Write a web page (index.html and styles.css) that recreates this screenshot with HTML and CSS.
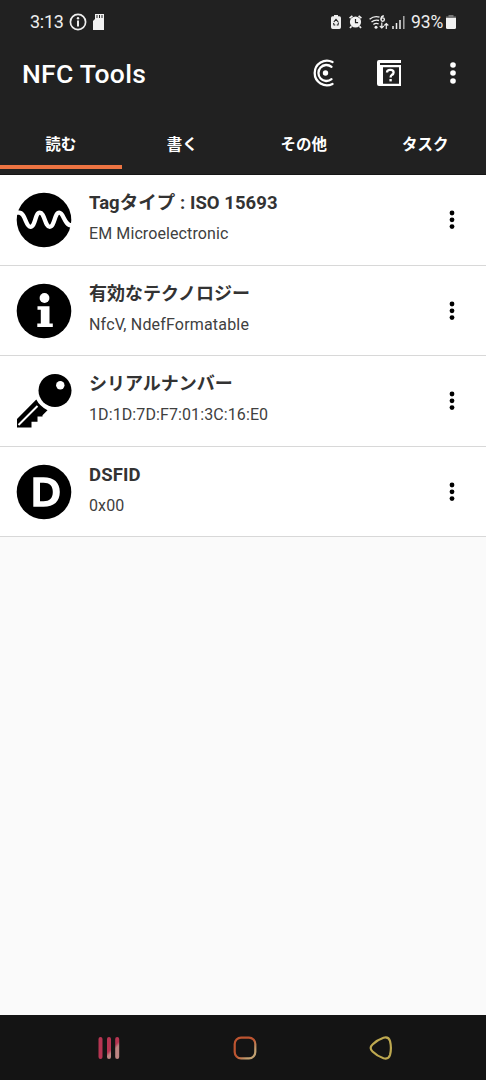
FILE: index.html
```html
<!DOCTYPE html>
<html lang="ja">
<head>
<meta charset="utf-8">
<title>NFC Tools</title>
<link rel="stylesheet" href="styles.css">
</head>
<body>
<div class="app">
  <header class="header">
    <div class="status">
      <span class="clock">3:13</span>
      <svg class="status-info" width="18" height="18" viewBox="0 0 18 18"><circle cx="9" cy="9" r="7.6" fill="none" stroke="#eee" stroke-width="1.7"/><rect x="8" y="7.5" width="2" height="6" fill="#eee"/><circle cx="9" cy="5.2" r="1.2" fill="#eee"/></svg>
      <svg class="status-sd" width="11" height="16" viewBox="0 0 11 16"><path d="M2 0h9v16H0V7l2-2z" fill="#f2f2f2"/><path d="M4 1v3M6.5 1v3M9 1v3" stroke="#222" stroke-width="1"/></svg>
      <div class="status-right">
        <svg width="10" height="14" viewBox="0 0 10 14"><path d="M3 0h4v1.3h1.500Q10 1.300 10 3v9.300Q10 14 8.300 14H1.700Q0 14 0 12.300V3Q0 1.300 1.500 1.300H3z" fill="#eee"/><path d="M2.800 7L5 4.300 7.200 7M7.500 7.500L7 10H5.700M4.300 10H3L2.500 8" fill="none" stroke="#222" stroke-width="1.100"/></svg>
        <svg class="alarm" width="13" height="14" viewBox="0 0 13 14"><circle cx="6.500" cy="7" r="5.600" fill="#f2f2f2"/><path d="M.6 3.200L3.400.8M9.600.8l2.800 2.400M2.500 11.200L1 13M10.500 11.200L12 13" stroke="#f2f2f2" stroke-width="1.700"/><path d="M6.500 4v3.600h2.600" fill="none" stroke="#222" stroke-width="1.200"/></svg>
        <svg class="wifi" width="20" height="15" viewBox="0 0 20 15"><g fill="none" stroke="#eee" stroke-width="1.400"><path d="M.6 4.300Q5.200.4 10.500 2.200M2.500 7Q6 4.200 10 5.500M4.400 9.500Q7 7.600 9.600 9"/><path d="M14.800.8Q12 1.300 12 4.400"/><circle cx="13.700" cy="4.600" r="1.700"/><path d="M12.800 7.500V13M10.800 11l2 2 2-2M17.300 14V8.500M15.300 10.500l2-2 2 2" stroke-width="1.200"/></g><circle cx="7" cy="12.200" r="1.500" fill="#eee"/></svg>
        <svg class="signal" width="13" height="13" viewBox="0 0 13 13"><path d="M1 10v3M4.500 7v6M8 4v9" stroke="#eee" stroke-width="1.500"/><path d="M11.800 0v13" stroke="#aaa" stroke-width="1.500"/></svg>
        <span class="percent">93%</span>
        <svg class="battery" width="10" height="14" viewBox="0 0 10 14"><path d="M2.500 0h5v1.500H10V4H0V1.500h2.500z" fill="#777"/><path d="M0 3h10v9.500Q10 14 8.500 14h-7Q0 14 0 12.500z" fill="#f2f2f2"/></svg>
      </div>
    </div>
    <div class="toolbar">
      <h1 class="title">NFC Tools</h1>
      <svg class="tool-scan" width="24" height="28" viewBox="0 0 24 28"><g fill="none" stroke="#fff" stroke-width="2.300" stroke-linecap="round"><path d="M21.500 3A12.300 12.300 0 1 0 21.500 25"/><path d="M20.500 7.800A8 8 0 1 0 20.500 20.200"/></g><circle cx="14.500" cy="14" r="2.700" fill="#fff"/></svg>
      <svg class="tool-help" width="24" height="26" viewBox="0 0 24 26"><path d="M2 0h22v3H3v2h21v21H2Q0 26 0 24V2Q0 0 2 0zM6 7.200V23.800H22V7.200z" fill="#fff" fill-rule="evenodd"/><path d="M10 12.500Q10 9.900 13.300 9.900T16.600 12.400Q16.600 14 14.800 14.900 13.600 15.700 13.600 17.400" fill="none" stroke="#fff" stroke-width="2.300"/><rect x="12.400" y="19" width="2.400" height="2.400" fill="#fff"/></svg>
      <svg class="tool-more" width="6" height="22" viewBox="0 0 6 22"><g fill="#fff"><circle cx="3" cy="3" r="2.800"/><circle cx="3" cy="11" r="2.800"/><circle cx="3" cy="19" r="2.800"/></g></svg>
    </div>
    <nav class="tabs">
      <div class="tab active">読む</div>
      <div class="tab">書く</div>
      <div class="tab">その他</div>
      <div class="tab">タスク</div>
    </nav>
  </header>
  <main class="list">
    <section class="row">
      <svg class="icon" width="56" height="56" viewBox="0 0 56 56"><circle cx="28" cy="28" r="27.300"/><path d="M0 20.700H3C9.500 20.700 9.500 34.800 14.500 34.800S19 20.700 23.800 20.700 29 34.800 33.800 34.800 38.500 20.700 43.200 20.700 48 33.500 56 33.500" fill="none" stroke="#fff" stroke-width="4.300"/></svg>
      <div class="text"><h2 class="name tag-name">Tagタイプ : ISO 15693</h2><p class="value maker">EM Microelectronic</p></div>
      <svg class="more" width="6" height="20" viewBox="0 0 6 20"><circle cx="3" cy="3" r="2.400"/><circle cx="3" cy="9.800" r="2.400"/><circle cx="3" cy="16.600" r="2.400"/></svg>
    </section>
    <section class="row short">
      <svg class="icon" width="56" height="56" viewBox="0 0 56 56"><circle cx="28" cy="28" r="27.300"/><circle cx="28.500" cy="15" r="4.900" fill="#fff"/><path d="M21.500 23.200H33.500V40.600H36.800V44H21.300V40.600H24.800V26.700H21.500z" fill="#fff"/></svg>
      <div class="text"><h2 class="name">有効なテクノロジー</h2><p class="value tech">NfcV, NdefFormatable</p></div>
      <svg class="more" width="6" height="20" viewBox="0 0 6 20"><circle cx="3" cy="3" r="2.400"/><circle cx="3" cy="9.800" r="2.400"/><circle cx="3" cy="16.600" r="2.400"/></svg>
    </section>
    <section class="row">
      <svg class="icon" width="56" height="56" viewBox="0 0 56 56"><circle cx="39" cy="17.500" r="16.500"/><circle cx="44.300" cy="12.200" r="4.200" fill="#fff"/><path d="M20.300 26.500Q23.500 33 31.500 37.300L26.500 42.300V43.500H21.500V48.800H15.500V54.500H1V46z"/><path d="M21.500 33L2.500 52" stroke="#fff" stroke-width="2"/></svg>
      <div class="text"><h2 class="name">シリアルナンバー</h2><p class="value serial">1D:1D:7D:F7:01:3C:16:E0</p></div>
      <svg class="more" width="6" height="20" viewBox="0 0 6 20"><circle cx="3" cy="3" r="2.400"/><circle cx="3" cy="9.800" r="2.400"/><circle cx="3" cy="16.600" r="2.400"/></svg>
    </section>
    <section class="row short">
      <svg class="icon" width="56" height="56" viewBox="0 0 56 56"><circle cx="28" cy="28" r="27.300"/><path d="M17.300 13.300H27.500C38 13.300 43.800 18.500 43.800 28S38 42.700 27.500 42.700H17.300zM24 18.800V37.200H27.500C33.500 37.200 36.800 34.200 36.800 28S33.500 18.800 27.500 18.800z" fill="#fff" fill-rule="evenodd"/></svg>
      <div class="text"><h2 class="name dsfid">DSFID</h2><p class="value">0x00</p></div>
      <svg class="more" width="6" height="20" viewBox="0 0 6 20"><circle cx="3" cy="3" r="2.400"/><circle cx="3" cy="9.800" r="2.400"/><circle cx="3" cy="16.600" r="2.400"/></svg>
    </section>
  </main>
  <footer class="navbar">
    <svg width="22" height="24" viewBox="0 0 22 24"><defs><linearGradient id="bars" gradientUnits="userSpaceOnUse" x1="8" y1="5" x2="20" y2="17"><stop offset=".55" stop-color="#b63552"/><stop offset=".72" stop-color="#bd8583"/></linearGradient></defs><path d="M2.500 3V21M11 3V21M19.200 3V21" stroke="url(#bars)" stroke-width="4" stroke-linecap="round"/></svg>
    <svg width="24" height="24" viewBox="0 0 24 24"><defs><linearGradient id="home" x1="0" y1="0" x2="1" y2="1"><stop offset=".5" stop-color="#bd5430"/><stop offset=".8" stop-color="#c1a071"/></linearGradient></defs><rect x="1.700" y="1.700" width="20.600" height="20.600" rx="6.300" fill="none" stroke="url(#home)" stroke-width="2.200"/></svg>
    <svg width="24" height="24" viewBox="0 0 24 24"><path d="M3.500 8.500Q8 4 14.500 1.800 19.500.4 21 5 22.800 12 21 19 19.500 23.600 14.500 22.200 8 20 3.500 15.500-.2 12 3.500 8.500z" fill="none" stroke="#bea950" stroke-width="2.200"/></svg>
  </footer>
</div>
</body>
</html>
```
FILE: styles.css
```css
* { box-sizing: border-box; }
body { margin: 0; font-family: Roboto, "Noto Sans CJK JP", sans-serif; }
svg { display: block; flex: none; }
.app { width: 486px; height: 1080px; display: flex; flex-direction: column; background: #fafafa; }
.header { height: 175px; background: #212121; color: #fff; flex: none; border-bottom: 1px solid #151515; }
.status { height: 44px; display: flex; align-items: center; padding: 0 30px; color: #eee; font-size: 18px; line-height: 20px; }
.clock { width: 39px; letter-spacing: -.3px; }
.status-sd { margin-left: 6px; }
.status-right { margin-left: auto; display: flex; align-items: center; }
.alarm { margin-left: 8px; }
.wifi { margin-left: 7px; }
.signal { margin-left: 3px; }
.percent { margin-left: 6px; font-size: 17.5px; letter-spacing: -.2px; }
.battery { margin-left: 3px; }
.toolbar { height: 58px; display: flex; align-items: center; padding: 0 30px 0 22px; }
.title { margin: 1px 0 0; font-size: 26.5px; line-height: 30px; font-weight: 500; letter-spacing: .3px; }
.tool-scan { margin-left: auto; }
.tool-help { margin-left: 42px; }
.tool-more { margin-left: 49px; }
.tabs { height: 67px; padding-top: 15px; display: grid; grid-template-columns: repeat(4, 1fr); }
.tab { height: 52px; padding-top: 14px; text-align: center; font: 700 15.500px/24px "Noto Sans CJK JP", sans-serif; }
.active { border-bottom: 4px solid #ed7442; }
.list { flex: 1; }
.row { height: 91px; display: flex; align-items: flex-start; background: #fff; border-bottom: 1px solid #d8d8d8; padding: 17px 31px 0 16px; }
.short { height: 90px; }
.text { flex: 1; padding-left: 17px; color: #333; }
.name { margin: -2px 0 0; font-size: 18px; line-height: 26px; font-weight: 700; white-space: nowrap; }
.tag-name { font-size: 18.5px; letter-spacing: .05px; }
.dsfid { font-size: 18.5px; letter-spacing: .15px; }
.value { margin: 6px 0 0; font-size: 16px; line-height: 24px; white-space: nowrap; color: #404040; letter-spacing: .1px; }
.tech { letter-spacing: .18px; }
.more { margin-top: 18px; }
.navbar { height: 65px; flex: none; display: flex; align-items: center; justify-content: space-between; padding: 0 93px 0 98px; background: #141414; }
```
